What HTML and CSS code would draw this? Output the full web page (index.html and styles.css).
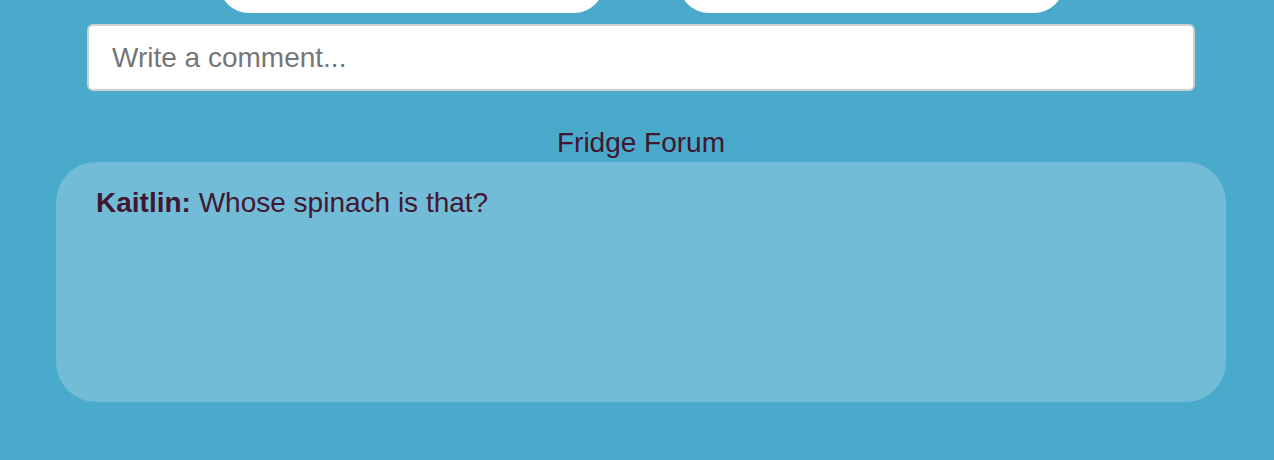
FILE: index.html
```html
<!DOCTYPE html>
<html>
<head>
<meta charset="utf-8">
<link rel="stylesheet" href="styles.css">
</head>
<body>
<div class="wrap">
  <div class="tabs">
    <div class="tab"></div>
    <div class="tab"></div>
  </div>
  <input class="comment" type="text" placeholder="Write a comment...">
  <h2 class="title">Fridge Forum</h2>
  <div class="panel">
    <p class="post"><b class="author">Kaitlin:</b> Whose spinach is that?</p>
  </div>
</div>
</body>
</html>
```
FILE: styles.css
```css
html, body {
  margin: 0;
  padding: 0;
  background: #4aaacc;
  font-family: "Liberation Sans", Arial, sans-serif;
  color: #3f1730;
  overflow: hidden;
}
.wrap {
  width: 1170px;
  margin-left: 56px;
  display: flex;
  flex-direction: column;
}
.tabs {
  display: flex;
  justify-content: center;
  gap: 75px;
  margin-top: -47px;
}
.tab {
  width: 385px;
  height: 60px;
  background: #fff;
  border-radius: 40px;
}
.comment {
  box-sizing: border-box;
  margin: 11px 31px 0;
  height: 67px;
  border: 2px solid #cfcfcf;
  border-radius: 6px;
  background: #fff;
  padding: 0 23px;
  font-family: "Liberation Sans", Arial, sans-serif;
  font-size: 28px;
  color: #333;
  outline: none;
}
.comment::placeholder {
  color: #767676;
}
.title {
  margin: 36px 0 3px;
  font-size: 28px;
  line-height: 32px;
  font-weight: normal;
  text-align: center;
  color: #3f1730;
}
.panel {
  box-sizing: border-box;
  height: 240px;
  background: #72bcd8;
  border-radius: 40px;
  padding: 25px 40px;
}
.post {
  margin: 0;
  font-size: 28px;
  line-height: 32px;
}
.author {
  font-weight: bold;
}
```
